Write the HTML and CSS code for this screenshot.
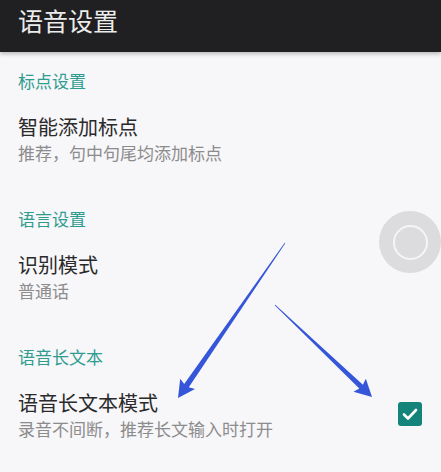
FILE: index.html
```html
<!DOCTYPE html>
<html lang="zh-CN">
<head>
<meta charset="UTF-8" />
<title>语音设置</title>
<link rel="stylesheet" href="styles.css">
</head>
<body>
<div class="appbar">
  <h1 class="appbar-title">语音设置</h1>
</div>

<div class="settings">
  <!-- 标点设置 -->
  <div class="category first">标点设置</div>
  <div class="pref">
    <div class="pref-text">
      <div class="pref-title">智能添加标点</div>
      <div class="pref-summary">推荐，句中句尾均添加标点</div>
    </div>
  </div>

  <!-- 语言设置 -->
  <div class="category">语言设置</div>
  <div class="pref">
    <div class="pref-text">
      <div class="pref-title">识别模式</div>
      <div class="pref-summary">普通话</div>
    </div>
  </div>

  <!-- 语音长文本 -->
  <div class="category">语音长文本</div>
  <div class="pref">
    <div class="pref-text">
      <div class="pref-title">语音长文本模式</div>
      <div class="pref-summary">录音不间断，推荐长文输入时打开</div>
    </div>
    <div class="checkbox checked">
      <svg viewBox="0 0 24 24" width="24" height="24">
        <path d="M6 12.5l4 4 8-8.5" fill="none" stroke="#fff" stroke-width="2.6" stroke-linecap="round" stroke-linejoin="round"/>
      </svg>
    </div>
  </div>
</div>

<!-- floating assistive button -->
<div class="float-ball"><div class="float-ring"></div></div>

<!-- annotation arrows -->
<svg class="arrows" viewBox="0 0 441 472" width="441" height="472">
  <polygon fill="#3556d8" points="285.3,243.2 188.8,387.2 195.0,389.0 178,398 180.2,378.8 184.2,384.0 284.7,242.8"/>
  <polygon fill="#3556d8" points="274.7,305.3 359.3,388.6 353.5,391.8 372,397 365.9,378.8 362.9,384.8 275.3,304.7"/>
</svg>
</body>
</html>
```

FILE: styles.css
```css
body {
  margin: 0;
  background: #f7f6f9;
  font-family: "Noto Sans CJK SC", "Noto Sans", sans-serif;
  color: #2a2a2a;
}
/* Toolbar */
.appbar {
  height: 52px;
  background: #201f22;
  box-shadow: 0 2px 4px rgba(0,0,0,0.25);
  padding-left: 18px;
  position: relative;
  z-index: 1;
}
.appbar-title {
  margin: 0;
  font-size: 25px;
  font-weight: normal;
  line-height: 40px;
  color: #ececec;
}
/* Preference list */
.category {
  padding: 21px 18px 0;
  font-size: 17px;
  line-height: 24px;
  color: #2f9c90;
}
.category.first {
  padding-top: 17px;
}
.pref {
  display: flex;
  align-items: center;
  padding: 21px 19px 20px 18px;
}
.pref-text {
  flex: 1;
}
.pref-title {
  font-size: 20px;
  line-height: 26px;
  color: #2a2a2a;
}
.pref-summary {
  font-size: 17px;
  line-height: 26px;
  color: #8c8c8c;
}
.checkbox {
  width: 24px;
  height: 24px;
  border-radius: 3px;
  margin-top: -4px;
}
.checkbox.checked {
  background: #14847b;
}
.checkbox svg {
  display: block;
}
/* Floating ball */
.float-ball {
  position: absolute;
  left: 379px;
  top: 211px;
  width: 62px;
  height: 62px;
  border-radius: 50%;
  background: #dcdcdf;
  display: flex;
  align-items: center;
  justify-content: center;
}
.float-ring {
  width: 31px;
  height: 31px;
  border: 2px solid #f5f5f7;
  border-radius: 50%;
}
/* Arrows */
.arrows {
  position: absolute;
  left: 0;
  top: 0;
  pointer-events: none;
}
```
